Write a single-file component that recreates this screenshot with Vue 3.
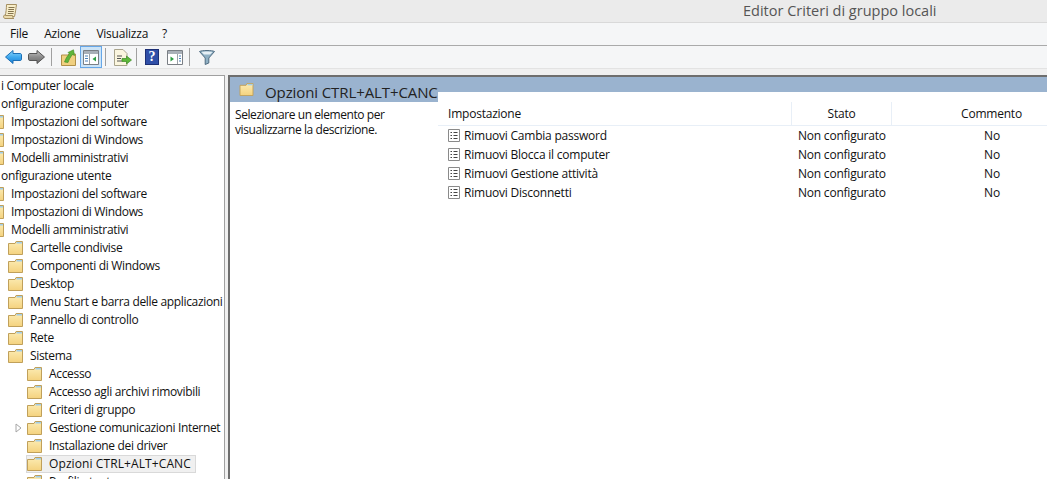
<script setup>
const menu = ['File', 'Azione', 'Visualizza', '?']
const tree = [
  { t: 'i Computer locale', l: 0 },
  { t: 'onfigurazione computer', l: 0 },
  { t: 'Impostazioni del software', l: 1 },
  { t: 'Impostazioni di Windows', l: 1 },
  { t: 'Modelli amministrativi', l: 1 },
  { t: 'onfigurazione utente', l: 0 },
  { t: 'Impostazioni del software', l: 1 },
  { t: 'Impostazioni di Windows', l: 1 },
  { t: 'Modelli amministrativi', l: 1 },
  { t: 'Cartelle condivise', l: 2 },
  { t: 'Componenti di Windows', l: 2 },
  { t: 'Desktop', l: 2 },
  { t: 'Menu Start e barra delle applicazioni', l: 2 },
  { t: 'Pannello di controllo', l: 2 },
  { t: 'Rete', l: 2 },
  { t: 'Sistema', l: 2 },
  { t: 'Accesso', l: 3 },
  { t: 'Accesso agli archivi rimovibili', l: 3 },
  { t: 'Criteri di gruppo', l: 3 },
  { t: 'Gestione comunicazioni Internet', l: 3, arrow: true },
  { t: 'Installazione dei driver', l: 3 },
  { t: 'Opzioni CTRL+ALT+CANC', l: 3, sel: true },
  { t: 'Profili utente', l: 3 },
]
const rows = ['Rimuovi Cambia password', 'Rimuovi Blocca il computer', 'Rimuovi Gestione attività', 'Rimuovi Disconnetti']
</script>

<template>
  <div class="win">
    <svg class="defs" width="0" height="0">
      <defs>
        <linearGradient id="fg" x1="0" y1="0" x2="0" y2="1">
          <stop offset="0" stop-color="#fcecb4" />
          <stop offset="1" stop-color="#f4d27e" />
        </linearGradient>
        <linearGradient id="blue" x1="0" y1="0" x2="0" y2="1">
          <stop offset="0" stop-color="#8fd6fb" />
          <stop offset=".5" stop-color="#3fa9ee" />
          <stop offset="1" stop-color="#1b7fd6" />
        </linearGradient>
        <linearGradient id="grey" x1="0" y1="0" x2="0" y2="1">
          <stop offset="0" stop-color="#c4c4c4" />
          <stop offset=".5" stop-color="#8c8c8c" />
          <stop offset="1" stop-color="#6a6a6a" />
        </linearGradient>
      </defs>
      <symbol id="folder" viewBox="0 0 15 14">
        <path d="M.5 2.500V13.500H14.500V.5H8L7 2.500Z" fill="url(#fg)" stroke="#c0a05a" />
        <path d="M8.500 1H14V2.500H8.500Z" fill="#9fcdea" />
      </symbol>
    </svg>

    <header class="title">
      <svg class="scroll" viewBox="0 0 14 15" width="14" height="15">
        <path d="M3.500.500H13.500C13 4 12.500 8 11.500 12.500H2C3 9 3.500 4 3.500.500Z" fill="#f8eec9" stroke="#a58f60" />
        <path d="M.5 12C1 11 2 11 2.500 11.500H9.500C9.500 13 10 14 11 14.500H2C1 14.500 .5 13 .5 12Z" fill="#ecdcae" stroke="#a58f60" />
        <path d="M5.500 3.500H11.500M5.300 5.500H11M5 7.500H10.800M4.800 9.500H10.500" stroke="#85744e" />
      </svg>
      <span class="title-text">Editor Criteri di gruppo locali</span>
    </header>

    <nav class="menu"><span v-for="m in menu" :key="m">{{ m }}</span></nav>

    <div class="toolbar">
      <svg class="arrow-l" width="17" height="14" viewBox="0 0 17 14">
        <path d="M.5 7L8 .5V3.500H15C16 3.500 16.500 4 16.500 5V9C16.500 10 16 10.500 15 10.500H8V13.500Z" fill="url(#blue)" stroke="#1c6fb5" />
      </svg>
      <svg class="arrow-r" width="17" height="14" viewBox="0 0 17 14">
        <path d="M16.500 7L9 .5V3.500H2C1 3.500 .5 4 .5 5V9C.5 10 1 10.500 2 10.500H9V13.500Z" fill="url(#grey)" stroke="#555" />
      </svg>
      <i class="sep s1"></i>
      <svg class="up" width="15" height="17" viewBox="0 0 15 17">
        <path d="M.5 6V16.500H14.500V5H8L7 6Z" fill="#f0d080" stroke="#b09048" />
        <path d="M3.500 13C5 9 6.500 6.500 8.500 5L7 3.500L12.500 .8L13.500 6.500L11.500 5.500C9.500 8 8 10.500 7 13.500Z" fill="#5fb53a" stroke="#3c8a24" stroke-width=".6" />
      </svg>
      <div class="active-btn">
        <svg width="16" height="15" viewBox="0 0 16 15">
          <path d="M.5.500H15.500V14.500H.5Z" fill="#fff" stroke="#7a7f85" />
          <path d="M1 1H15V4H1Z" fill="#a9b0b8" />
          <path d="M6.500 4V14" stroke="#9aa0a6" />
          <path d="M2 6H5M2 8.500H5M2 11H5" stroke="#4a80b8" />
          <path d="M13 6.500V11.500L9.500 9Z" fill="#2f9e44" />
        </svg>
      </div>
      <i class="sep s2"></i>
      <svg class="export" width="18" height="17" viewBox="0 0 18 17">
        <path d="M.5.500H9L13 4.500V16.500H.5Z" fill="#fbf6df" stroke="#a9a48c" />
        <path d="M3 7H8M3 9.500H7M3 12H8" stroke="#555" />
        <path d="M8 9.500H12.500V7L17.500 11L12.500 15V12.500H8Z" fill="#5db83a" stroke="#3c8a24" stroke-width=".7" />
      </svg>
      <i class="sep s3"></i>
      <div class="help">?</div>
      <svg class="win2" width="16" height="15" viewBox="0 0 16 15">
        <path d="M.5.500H15.500V14.500H.5Z" fill="#fff" stroke="#7a7f85" />
        <path d="M1 1H15V4H1Z" fill="#a9b0b8" />
        <path d="M10.500 4V14" stroke="#9aa0a6" />
        <path d="M12 6H14M12 8.500H14M12 11H14" stroke="#4a80b8" />
        <path d="M3.500 6.500V11.500L7 9Z" fill="#2f9e44" />
      </svg>
      <i class="sep s4"></i>
      <svg class="filter" width="16" height="15" viewBox="0 0 16 15">
        <path d="M.5 1.500C3 .2 13 .2 15.500 1.500L9.800 8V13L6.200 14.500V8Z" fill="#8fb0c4" stroke="#4f6b80" />
        <path d="M2.500 2C5 1.300 11 1.300 13.500 2L11 4.500H5Z" fill="#e6eff5" />
      </svg>
    </div>

    <main class="content">
      <aside class="tree">
        <div
          v-for="(n, i) in tree"
          :key="i"
          class="node"
          :class="['lvl' + n.l, { sel: n.sel }]"
        >
          <svg v-if="n.arrow" class="twisty" width="7" height="10" viewBox="0 0 7 10">
            <path d="M1 1L6 5L1 9Z" fill="#fff" stroke="#a6a6a6" />
          </svg>
          <svg v-if="n.l >= 1" class="fold" width="15" height="14"><use href="#folder" /></svg>
          <span class="label">{{ n.t }}</span>
        </div>
      </aside>

      <section class="pane">
        <div class="banner">
          <svg class="ban-fold" width="15" height="13"><use href="#folder" /></svg>
          <span class="ban-text">Opzioni CTRL+ALT+CANC</span>
        </div>
        <div class="body">
          <p class="desc">Selezionare un elemento per visualizzarne la descrizione.</p>
          <div class="list">
            <div class="head">
              <span class="c1">Impostazione</span>
              <span class="c2">Stato</span>
              <span class="c3">Commento</span>
            </div>
            <div v-for="r in rows" :key="r" class="row">
              <span class="c1">
                <svg width="12" height="13" viewBox="0 0 12 13">
                  <path d="M.5.500H11.500V12.500H.5Z" fill="#fff" stroke="#8a8a8a" />
                  <path d="M2.500 3.500H4M5.500 3.500H9.500M2.500 6.500H4M5.500 6.500H9.500M2.500 9.500H4M5.500 9.500H9.500" stroke="#444" />
                </svg>
                <span>{{ r }}</span>
              </span>
              <span class="c2">Non configurato</span>
              <span class="c3">No</span>
            </div>
          </div>
        </div>
      </section>
    </main>
  </div>
</template>

<style>
html, body { margin: 0; overflow: hidden; }
</style>

<style scoped>
.win {
  width: 1047px;
  height: 479px;
  overflow: hidden;
  background: #f0f0f0;
  font: 12px/18px "Open Sans", sans-serif;
  letter-spacing: -0.22px;
  color: #111;
  display: flex;
  flex-direction: column;
}
.defs { position: absolute; }
.title {
  height: 22px;
  background: #ebebeb;
  border-bottom: 1px solid #d9d9d9;
  display: flex;
  align-items: center;
  padding-left: 3px;
  flex: none;
}
.title-text {
  margin-left: 726px;
  font-size: 14.5px;
  color: #555;
  letter-spacing: 0;
}
.menu {
  height: 22px;
  background: #f5f6f7;
  border-bottom: 1px solid #aaa;
  display: flex;
  align-items: center;
  padding-left: 10px;
  gap: 16px;
  flex: none;
}
.menu span:last-child { margin-left: -2px; }
.toolbar {
  height: 22px;
  background: #f5f6f7;
  border-bottom: 1px solid #e3e3e3;
  display: flex;
  align-items: center;
  padding-left: 5px;
  flex: none;
}
.arrow-r { margin-left: 6px; }
.sep { width: 1px; height: 18px; background: #a0a0a0; flex: none; }
.s1 { margin-left: 6px; }
.up { margin-left: 9px; }
.active-btn {
  width: 22px;
  height: 22px;
  margin-left: 4px;
  box-sizing: border-box;
  background: #cce4f7;
  border: 1px solid #66a7e8;
  display: flex;
  align-items: center;
  justify-content: center;
}
.s2 { margin-left: 3px; }
.export { margin-left: 8px; }
.s3 { margin-left: 4px; }
.help {
  width: 14px;
  height: 16px;
  margin-left: 8px;
  background: #2f4fa8;
  border: 1px solid #1c2f75;
  box-sizing: border-box;
  color: #fff;
  font: bold 14px/14px "Liberation Serif", serif;
  text-align: center;
  letter-spacing: 0;
}
.win2 { margin-left: 8px; }
.s4 { margin-left: 6px; }
.filter { margin-left: 9px; }
.content {
  flex: 1;
  display: flex;
  margin-top: 6px;
  min-height: 0;
}
.tree {
  width: 225px;
  background: #fff;
  border-right: 1px solid #a0a0a0;
  border-top: 1px solid #a0a0a0;
  box-sizing: border-box;
  overflow: hidden;
  flex: none;
  padding-top: 1px;
  letter-spacing: -0.33px;
}
.node {
  height: 18px;
  display: flex;
  align-items: center;
  white-space: nowrap;
  position: relative;
}
.fold { flex: none; }
.lvl0 { padding-left: 1px; }
.lvl1 { margin-left: -11px; }
.lvl2 { padding-left: 8px; }
.lvl3 { margin-left: 26px; padding-left: 1px; }
.label { margin-left: 7px; }
.lvl0 .label { margin-left: 0; }
.twisty {
  position: absolute;
  left: -11px;
  top: 4px;
}
.sel {
  width: 170px;
  box-sizing: border-box;
  background: #f0f0f0;
  box-shadow: inset 0 0 0 1px #d9d9d9;
  letter-spacing: 0.1px;
}
.pane {
  margin-left: 3px;
  flex: 1;
  min-width: 0;
  background: #fff;
  border-left: 2px solid #6e6e6e;
  border-top: 2px solid #6e6e6e;
  display: flex;
  flex-direction: column;
}
.banner {
  height: 25px;
  background: #9ab3cf;
  display: flex;
  align-items: flex-start;
  padding-left: 9px;
  font-size: 15px;
  color: #222;
  letter-spacing: -0.1px;
  flex: none;
}
.ban-fold { margin-top: 6px; }
.ban-text { margin: 5px 0 0 11px; line-height: 20px; }
.body { display: flex; flex: 1; }
.desc {
  width: 168px;
  margin: 5px 0 0 5px;
  line-height: 15px;
  letter-spacing: -0.42px;
  flex: none;
}
.list {
  margin: -10px 0 0 35px;
  flex: 1;
  min-width: 0;
  background: #fff;
  position: relative;
}
.head {
  height: 23px;
  margin-top: 10px;
  display: grid;
  grid-template-columns: 353px 100px 200px;
  align-items: center;
  border-bottom: 1px solid #e8eff7;
}
.head span { height: 23px; line-height: 23px; }
.head .c1 { padding-left: 10px; }
.head .c2, .head .c3 { text-align: center; border-left: 1px solid #e8eff7; }
.row {
  height: 19px;
  box-sizing: border-box;
  padding-top: 1px;
  display: grid;
  grid-template-columns: 353px 100px 200px;
  align-items: center;
}
.row .c1 { padding-left: 10px; display: flex; align-items: center; gap: 4px; }
.row .c1 svg { margin-bottom: 2px; flex: none; }
.row .c2 { padding-left: 7px; }
.row .c3 { text-align: center; padding-left: 2px; }
</style>
